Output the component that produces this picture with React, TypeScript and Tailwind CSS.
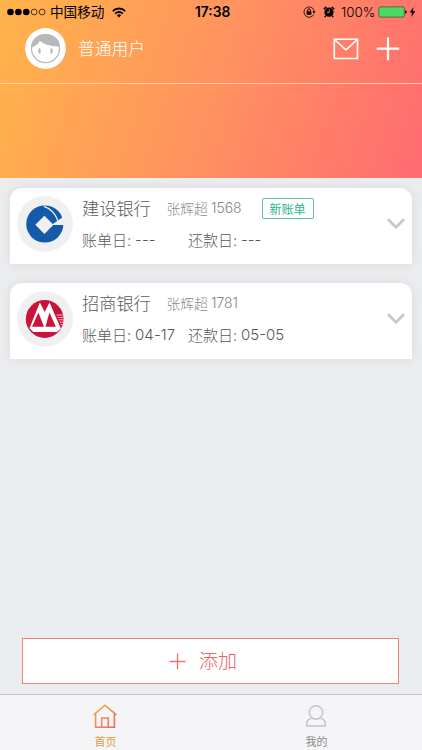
import React from 'react';

const StatusBar = () => (
  <div className="flex h-6 items-center text-black">
    <svg className="ml-[7px] shrink-0" width="39" height="8" viewBox="0 0 39 8">
      <circle cx="3.5" cy="4" r="3.3" />
      <circle cx="11.4" cy="4" r="3.3" />
      <circle cx="19.3" cy="4" r="3.3" />
      <circle cx="27.2" cy="4" r="2.9" fill="none" stroke="#000" strokeWidth=".7" />
      <circle cx="35.1" cy="4" r="2.9" fill="none" stroke="#000" strokeWidth=".7" />
    </svg>
    <span className="ml-1 w-[55px] shrink-0 whitespace-nowrap text-[13.6px] leading-6">中国移动</span>
    <svg className="ml-[7px] shrink-0" width="14" height="11" viewBox="0 0 14 11" fill="none" stroke="#000" strokeWidth="1.8">
      <path d="M.8 4.1a8.7 8.7 0 0 1 12.4 0M3.2 6.6a5.3 5.3 0 0 1 7.6 0" />
      <path d="M7 10.4 4.9 8.3a3 3 0 0 1 4.2 0z" fill="#000" stroke="none" />
    </svg>
    <span className="ml-[69px] w-[38px] shrink-0 text-[13.8px] font-semibold leading-6">17:38</span>
    <svg className="ml-[70px] shrink-0" width="13" height="12" viewBox="0 0 13 12" fill="none" stroke="#000">
      <path d="M10.8 8.4A5.2 5.2 0 1 1 11 4.2" strokeWidth=".8" />
      <path d="M10.9 4.2v2.2" strokeWidth=".8" />
      <path d="m9.3 5.6 1.7 2 1.7-2z" fill="#000" stroke="none" />
      <path d="M4.6 5.6V4.2a1.4 1.4 0 0 1 2.8 0v1.4" strokeWidth=".9" />
      <path d="M3.6 5.2h4.8v3.5H3.6z" fill="#000" stroke="none" />
    </svg>
    <svg className="ml-[7px] shrink-0" width="12" height="12" viewBox="0 0 12 12">
      <circle cx="6" cy="6.2" r="4.6" />
      <path d="M.8 3.2 3.3.9M11.2 3.2 8.7.9M2.8 9.8l-1 1.3M9.2 9.8l1 1.3" stroke="#000" strokeWidth="1.5" />
      <path d="M6.2 3.4v3.1H3.9" fill="none" stroke="#ff8f60" strokeWidth=".9" />
    </svg>
    <span className="ml-[6px] w-[35px] shrink-0 text-[13.4px] font-light leading-6">100%</span>
    <svg className="ml-[2px] shrink-0" width="38" height="12" viewBox="0 0 38 12">
      <rect x=".9" y=".9" width="25.4" height="10.2" rx="1.2" fill="#4cd964" stroke="#31522a" strokeWidth=".7" />
      <path d="M27.2 4.2q1.6.4 1.6 1.8t-1.6 1.8z" />
      <path d="M35.6 1.1 31.6 6.6h2.5L33.2 11l4.1-5.7h-2.6z" />
    </svg>
  </div>
);

const Avatar = () => (
  <svg className="ml-[25px] shrink-0" width="41" height="41" viewBox="0 0 41 41">
    <circle cx="20.5" cy="20.5" r="20.4" fill="#fff" />
    <circle cx="20.5" cy="20.6" r="14" fill="#fff" stroke="#bbbbbd" strokeWidth="1.3" />
    <path d="M6 19.500C6.500 11 12.500 6 20.500 6s14.300 5 14.500 12.500C29 18.300 20 17.500 14.800 12.700 13 16.500 10 18.300 6 19.500z" fill="#b8b8bb" />
    <ellipse cx="14.500" cy="23" rx="1.200" ry="3" fill="#b8b8bb" />
    <ellipse cx="26.500" cy="23" rx="1.200" ry="3" fill="#b8b8bb" />
  </svg>
);

const ConstructionBankLogo = () => (
  <svg width="56" height="56" viewBox="0 0 56 56">
    <circle cx="28" cy="28" r="28" fill="#f0f0f0" />
    <circle cx="27.800" cy="28" r="18.600" fill="#1459ac" />
    <path d="M27.400 19.700 36.500 28.800 27.400 37.900 18.300 28.800z" fill="#f0f0f0" />
    <path d="M34.500 28.900 41.600 24.100 45.300 21.400 48 20V28.900z" fill="#f0f0f0" />
    <path d="M27 10.300C33.500 12.500 38.500 17.500 40.900 24.800" fill="none" stroke="#f0f0f0" strokeWidth="1.300" />
  </svg>
);

const MerchantsBankLogo = () => (
  <svg width="56" height="56" viewBox="0 0 56 56">
    <circle cx="28" cy="28" r="28" fill="#f0f0f0" />
    <circle cx="27.700" cy="28" r="18.900" fill="#c8143a" />
    <path d="M22.900 11.500 27.700 21 32.500 11.500 43.300 36.200 44 37.200 40 41H16.300L12.500 37.200z" fill="#fff" />
    <path d="M21.400 21.400 27 35.800H15zM32.400 21.400 38.900 35.800H28.500z" fill="#c8143a" />
    <path d="M39.500 24H47M40.500 26.400H47.500M41.500 28.800H47.500M42.500 31.200H47.500M43.500 33.600H47" stroke="#f3c4cd" strokeWidth=".9" />
  </svg>
);

type BillProps = {
  logo: React.ReactNode;
  bank: string;
  tail: string;
  billDay: string;
  dueDay: string;
  fresh?: boolean;
};

const BillCard = ({ logo, bank, tail, billDay, dueDay, fresh }: BillProps) => (
  <section className="flex h-[75.500px] rounded-t-[12px] bg-white pl-[7px] shadow-[0_0_8px_rgba(120,125,135,0.16)]">
    <div className="mt-2 h-14 w-14 shrink-0">{logo}</div>
    <div className="ml-[9px] min-w-0 flex-1 whitespace-nowrap text-[#585858]">
      <div className="mt-[8px] flex h-6 items-center">
        <h2 className="w-[84.500px] pt-px text-[17.200px] font-light leading-6">{bank}</h2>
        <span className="w-[44.500px] pt-px text-[13.800px] font-light leading-6 text-[#8c8c8c]">张辉超</span>
        <span className="w-[50.500px] text-[13.900px] font-light leading-6 text-[#858585]">{tail}</span>
        {fresh && (
          <span className="h-[21px] w-[52px] rounded-[2px] border border-[#5cc6a2] pt-px text-center text-[12.200px] leading-[19px] text-[#2fb489]">
            新账单
          </span>
        )}
      </div>
      <div className="mt-2 flex h-6 items-center text-[15px] font-light leading-6">
        <span className="w-[53px] pt-px">账单日:</span>
        <span className="w-[53px] tracking-[0.1px]">{billDay}</span>
        <span className="w-[53px] pt-px">还款日:</span>
        <span>{dueDay}</span>
      </div>
    </div>
    <svg className="mr-[6px] mt-[29px] shrink-0" width="20" height="14" viewBox="0 0 20 14" fill="none" stroke="#c8c8c8" strokeWidth="2.800">
      <path d="m2 2.300 8 8 8-8" />
    </svg>
  </section>
);

const TabBar = () => (
  <nav className="grid h-14 grid-cols-2 border-t border-[#c6c6c9] bg-[#f5f5f7] text-[11px]">
    <div className="flex flex-col items-center text-[#e69a40]">
      <svg className="mr-px mt-[9px]" width="24" height="25" viewBox="0 0 24 25" fill="none" stroke="url(#home)" strokeWidth="1.600">
        <defs>
          <linearGradient id="home" x1="0" y1="0" x2="1" y2="1">
            <stop offset="0" stopColor="#f0b33e" />
            <stop offset="1" stopColor="#ee6464" />
          </linearGradient>
        </defs>
        <path d="M1.200 11.300V10.300L12 1.200 22.800 10.300V11.300M2.600 10V23.300H21.400V10M8.700 23V14H15.300V23" />
      </svg>
      <span className="mt-[5px] leading-4">首页</span>
    </div>
    <div className="flex flex-col items-center text-[#8b8b8e]">
      <svg className="mr-px mt-[9px]" width="22" height="25" viewBox="0 0 22 25" fill="none" stroke="#c4c4c7" strokeWidth="1.400">
        <circle cx="11" cy="8.500" r="6.700" />
        <path d="M6.500 14.300C3 15.300 1.500 16.500 1.500 22H20.500C20.500 16.500 19 15.300 15.500 14.300" />
      </svg>
      <span className="mt-[5px] leading-4">我的</span>
    </div>
  </nav>
);

export default function App() {
  return (
    <main className="flex h-[750px] w-[422px] flex-col overflow-hidden bg-[#ebecee] font-[Inter,'Noto_Sans_CJK_SC',sans-serif]">
      <header className="h-[178px] shrink-0 bg-[linear-gradient(108deg,#ffb44a_0%,#ff9160_52%,#ff6b71_100%)]">
        <StatusBar />
        <div className="flex h-[60px] items-start border-b border-[#ffd3b0] pt-1">
          <Avatar />
          <span className="ml-[12px] w-[70px] pt-px text-[16.800px] font-light leading-[41px] text-white">普通用户</span>
          <svg className="ml-auto mt-[10px]" width="26" height="22" viewBox="0 0 26 22" fill="none" stroke="#fff" strokeWidth="1.600">
            <path d="M1.300 1.300H24.500V20.500H1.300zM1.500 1.500 12.900 11.800 24.300 1.500" />
          </svg>
          <svg className="ml-[17px] mr-[22px] mt-[9px]" width="24" height="24" viewBox="0 0 24 24" stroke="#fff" strokeWidth="2.200">
            <path d="M.8 11.700H23.200M12 .5V23.300" />
          </svg>
        </div>
      </header>
      <div className="flex flex-1 flex-col gap-[19.500px] px-[10px] pt-[10px]">
        <BillCard logo={<ConstructionBankLogo />} bank="建设银行" tail="1568" billDay="---" dueDay="---" fresh />
        <BillCard logo={<MerchantsBankLogo />} bank="招商银行" tail="1781" billDay="04-17" dueDay="05-05" />
      </div>
      <button className="mb-[10px] ml-[22px] mr-[23px] flex h-[46px] shrink-0 items-center justify-center border border-[#ee8273] bg-white pr-[15px] text-[19px] font-light text-[#e8635c]">
        <svg className="mr-[13px]" width="17" height="17" viewBox="0 0 17 17" stroke="#ea746c" strokeWidth="1.300">
          <path d="M.5 8.500H16.500M8.500.5V16.500" />
        </svg>
        <span className="pt-[2px]">添加</span>
      </button>
      <TabBar />
    </main>
  );
}
